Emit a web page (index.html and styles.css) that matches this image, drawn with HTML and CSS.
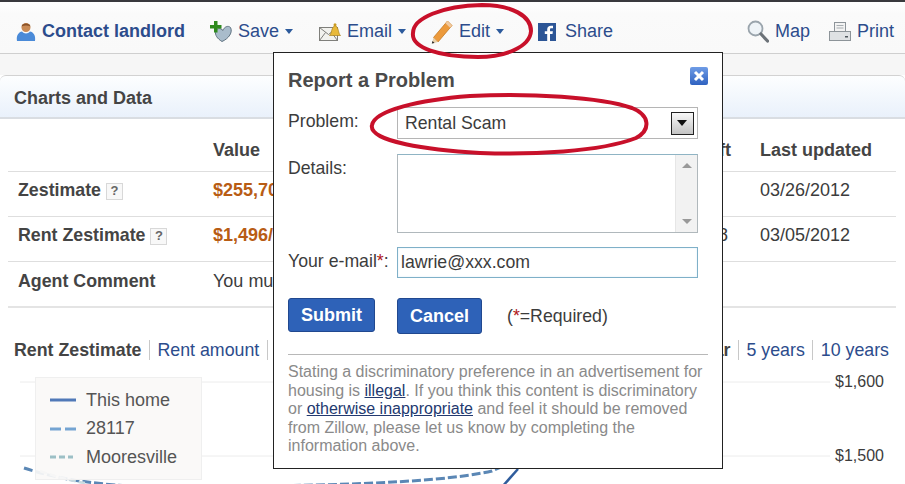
FILE: index.html
```html
<!DOCTYPE html>
<html lang="en">
<head>
<meta charset="utf-8">
<title>Report a Problem</title>
<link rel="stylesheet" href="styles.css">
</head>
<body>
<div class="page">
  <nav class="toolbar">
    <a class="tool tool-contact">
      <svg class="icon" width="20" height="20" viewBox="0 0 20 20"><circle cx="10" cy="5.500" r="4.500" fill="#c98a55"/><path d="M5.500 4.500C6 .5 14 .5 14.500 4.500 12 3 8 3 5.500 4.500z" fill="#8a5228"/><path d="M1 19c-1-6 2-9 5-9.500 2 2.500 6 2.500 8 0 3 .5 6 3.500 5 9.500z" fill="#4a8ad8"/></svg>
      <span>Contact landlord</span>
    </a>
    <a class="tool tool-save">
      <svg class="icon" width="22" height="21" viewBox="0 0 22 21"><path d="M12 20.500C7 17.500 5 14 5.500 10.500 6.500 7 10.500 6.500 13 9.500c1-3.500 5-5.500 7.500-3 2.500 4.500-1.500 11-8.500 14z" fill="#a9bccb" stroke="#5f7280"/><path d="M4 0h3.500v4H11.500v3.500H7.500V11.500H4V7.500H0V4h4z" fill="#2f8a1e"/></svg>
      <span>Save</span><i class="caret"></i>
    </a>
    <a class="tool tool-email">
      <svg class="icon" width="22" height="18" viewBox="0 0 22 18"><rect x=".5" y="4.500" width="18" height="13" fill="#f2f2ee" stroke="#7f7f7b"/><path d="M.5 4.500l9 7 9-7M.5 17.500l6-8M18.500 17.500l-6-8" fill="none" stroke="#7f7f7b"/><path d="M10.500 12.500c2.500-2 1.500-8 5.500-10 4 1.500 3 8 5.500 10z" fill="#e8b93a" stroke="#a8801c" stroke-width=".7"/><circle cx="16" cy="1.800" r="1.500" fill="#c99a20"/></svg>
      <span>Email</span><i class="caret"></i>
    </a>
    <a class="tool tool-edit">
      <svg class="icon" width="22" height="24" viewBox="0 0 22 24"><path d="M16.500 1l4.500 4.500L7 22 2.500 17.500z" fill="#ec9a3c" stroke="#c57a22" stroke-width=".8"/><path d="M16.500 1l4.500 4.500-2 2.300-4.500-4.500z" fill="#f0c9a0"/><path d="M2.500 17.500L7 22 .8 23.500z" fill="#e9cfa8"/><path d="M1.500 21L3.500 23 .8 23.500z" fill="#222"/></svg>
      <span>Edit</span><i class="caret"></i>
    </a>
    <a class="tool tool-share">
      <svg class="icon" width="18" height="18" viewBox="0 0 18 18"><rect width="18" height="18" fill="#2c5596"/><path d="M12 18v-7h2.500l.4-2.800H12V6.600c0-.8.3-1.300 1.400-1.300H15V2.800c-.5-.1-1.300-.1-2-.1-2.200 0-3.800 1.300-3.800 3.700v1.800H6.800V11h2.400v7z" fill="#fff"/></svg>
      <span>Share</span>
    </a>
    <a class="tool tool-map">
      <svg class="icon" width="22" height="23" viewBox="0 0 22 23"><circle cx="8.500" cy="8.500" r="7" fill="#eef3f7" stroke="#9aa4ac" stroke-width="1.800"/><path d="M14 14l6.500 7" stroke="#6c7278" stroke-width="3.200" stroke-linecap="round"/></svg>
      <span>Map</span>
    </a>
    <a class="tool tool-print">
      <svg class="icon" width="22" height="20" viewBox="0 0 22 20"><rect x="5.500" y=".5" width="11" height="9" fill="#f3f3f3" stroke="#8d9499"/><path d="M7.500 3.500h7M7.500 6h7" stroke="#a8aeb2"/><rect x=".5" y="9.500" width="21" height="9" fill="#dfe2e4" stroke="#8d9499"/><rect x="16" y="14" width="3" height="1.500" fill="#50585e"/></svg>
      <span>Print</span>
    </a>
  </nav>

  <div class="strip"></div>
  <h2 class="panel-head">Charts and Data</h2>

  <table class="data">
    <colgroup><col class="c1"><col class="c2"><col class="c3"><col class="c4"></colgroup>
    <thead>
      <tr><th></th><th>Value</th><th>$/sqft</th><th>Last updated</th></tr>
    </thead>
    <tbody>
      <tr><th>Zestimate <b class="help">?</b></th><td class="money">$255,700</td><td></td><td>03/26/2012</td></tr>
      <tr><th>Rent Zestimate <b class="help">?</b></th><td class="money">$1,496/mo</td><td>$0.78</td><td>03/05/2012</td></tr>
      <tr class="last"><th>Agent Comment</th><td colspan="2">You must be the listing agent to add an agent comment</td><td></td></tr>
    </tbody>
  </table>

  <div class="ranges">
    <div class="range-group">
      <b class="range">Rent Zestimate</b>
      <a class="range">Rent amount</a>
      <a class="range">Rent/sqft</a>
    </div>
    <div class="range-group">
      <b class="range">1 year</b>
      <a class="range">5 years</a>
      <a class="range">10 years</a>
    </div>
  </div>

  <section class="chart">
    <svg class="plot" width="905" height="114" viewBox="0 370 905 114">
      <path d="M20 381H830M20 455H830" stroke="#ececec" fill="none"/>
      <text class="axis" x="835" y="386">$1,600</text>
      <text class="axis" x="835" y="460">$1,500</text>
      <path d="M24 467C60 479 100 484 150 486M220 486C300 484 430 484 492 470L510 462" stroke="#5b87b5" stroke-width="3" stroke-dasharray="9 3" fill="none"/>
      <path d="M40 470C60 477 72 480 85 482" stroke="#c8dbe0" stroke-width="2.500" stroke-dasharray="7 3" fill="none"/>
      <path d="M502 486L518 468" stroke="#2f5c9c" stroke-width="2.500" fill="none"/>
    </svg>
    <div class="legend">
      <div class="legend-row"><svg width="26" height="4"><path d="M0 2H26" stroke="#5079b8" stroke-width="3"/></svg><span>This home</span></div>
      <div class="legend-row"><svg width="26" height="4"><path d="M0 2H26" stroke="#74a4d2" stroke-width="3" stroke-dasharray="11 4"/></svg><span>28117</span></div>
      <div class="legend-row"><svg width="26" height="4"><path d="M0 2H23" stroke="#9cc0c6" stroke-width="3" stroke-dasharray="6 3"/></svg><span>Mooresville</span></div>
    </div>
  </section>

  <div class="modal">
    <div class="modal-title">
      <h1>Report a Problem</h1>
      <span class="close"><svg width="12" height="12" viewBox="0 0 12 12"><path d="M2 2l8 8M10 2l-8 8" stroke="#fff" stroke-width="3"/></svg></span>
    </div>
    <form class="form">
      <label class="lbl">Problem:</label>
      <div class="select"><span>Rental Scam</span><i class="select-btn"></i></div>
      <label class="lbl">Details:</label>
      <div class="textarea"><div class="scroller"><i class="arrow-up"></i><i class="arrow-down"></i></div></div>
      <label class="lbl">Your e-mail<em>*</em>:</label>
      <input class="email" type="text" value="lawrie@xxx.com">
    </form>
    <div class="actions">
      <button class="btn btn-submit" type="button">Submit</button>
      <button class="btn btn-cancel" type="button">Cancel</button>
      <span class="req">(<em>*</em>=Required)</span>
    </div>
    <p class="note">Stating a discriminatory preference in an advertisement for housing is <a>illegal</a>. If you think this content is discriminatory or <a>otherwise inappropriate</a> and feel it should be removed from Zillow, please let us know by completing the information above.</p>
  </div>

  <svg class="marks" width="905" height="160" viewBox="0 0 905 160">
    <path d="M413 33C413 18 442 6 482 5 512 5 531 16 531 31 530 47 505 57 478 57 440 57 411 48 413 33z"/>
    <path d="M372 125C375 110 420 100 470 96 530 93 600 97 632 108 650 115 651 130 636 138 600 152 530 155 480 153 430 150 368 142 372 125z"/>
  </svg>
</div>
</body>
</html>
```

FILE: styles.css
```css
* { box-sizing: border-box; }
html, body { margin: 0; padding: 0; }
body { font-family: "Liberation Sans", Arial, sans-serif; color: #3c3c3c; background: #fff; }
.page { position: relative; width: 905px; height: 484px; overflow: hidden; }

.toolbar { display: flex; align-items: center; height: 54px; padding: 8px 0 0 16px; border-top: 2px solid #3a3a3e; border-bottom: 1px solid #cfcfcf; background: linear-gradient(#fff, #fafafa 12px, #f9f9f9); font-size: 18px; color: #2c4c8c; }
.tool { display: flex; align-items: center; gap: 6px; }
.tool-contact { font-weight: bold; }
.tool-save { margin-left: 25px; }
.tool-email { margin-left: 26px; }
.tool-edit { margin-left: 25px; }
.tool-share { margin-left: 34px; gap: 9px; }
.tool-map { margin-left: auto; }
.tool-print { margin-left: 19px; margin-right: 11px; }
.caret { width: 0; height: 0; border: 4px solid transparent; border-top: 5px solid #2c5a9c; border-bottom: 0; }

.strip { height: 21px; background: #f6f6f6; }
.panel-head { margin: 0; height: 44px; padding-left: 14px; border-top: 1px solid #d2d2d2; border-bottom: 2px solid #d9dde2; border-radius: 6px 6px 0 0; background: linear-gradient(#fdfeff, #e9f1fb); font-size: 18px; line-height: 44px; font-weight: bold; color: #444; }

.data { width: 888px; margin: 11px 0 0 8px; table-layout: fixed; border-collapse: collapse; font-size: 18px; }
.c1 { width: 195px; }
.c2 { width: 470px; }
.c3 { width: 77px; }
.data th, .data td { padding: 0 0 0 10px; text-align: left; white-space: nowrap; overflow: hidden; border-bottom: 1px solid #dedede; }
.data tbody th, .data tbody td { padding-bottom: 7px; }
.data tbody th { font-size: 17.800px; }
.data th { font-weight: bold; color: #444; }
.data td { color: #3c3c3c; }
.data thead tr { height: 41px; }
.data tbody tr { height: 45px; }
.data .last th, .data .last td { border-bottom: 2px solid #e4e4e4; height: 46px; padding-bottom: 5px; }
.data .money { color: #b85c14; font-weight: bold; }
.help { display: inline-block; width: 17px; height: 17px; margin-left: 0; border: 1px solid #d8d8d8; background: #f8f8f8; font-size: 13px; line-height: 14px; text-align: center; color: #666; vertical-align: 1px; }

.ranges { display: flex; justify-content: space-between; align-items: center; height: 63px; padding: 21px 16px 0 14px; font-size: 17.800px; color: #2c4c8c; }
.range-group { display: flex; }
.range { padding: 0 7.500px; border-left: 1px solid #c8c8c8; line-height: 20px; }
.range:first-child { padding-left: 0; border-left: 0; }
.range:last-child { padding-right: 0; }
b.range { color: #444; }

.chart { position: relative; height: 114px; }
.plot { display: block; }
.axis { font-size: 16px; fill: #3c3c3c; font-family: "Liberation Sans", Arial, sans-serif; }
.legend { position: absolute; left: 35px; top: 6px; width: 167px; height: 103px; padding: 8px 0 0 14px; border: 1px solid #efefef; background: rgba(250, 248, 247, .92); font-size: 18px; color: #555; }
.legend-row { display: flex; align-items: center; gap: 10px; height: 28.500px; }

.modal { position: absolute; left: 273px; top: 52px; width: 450px; height: 417px; padding: 15px 14px 0; background: #fff; border: 1px solid #222; }
.modal-title { display: flex; justify-content: space-between; align-items: flex-start; height: 24px; }
.modal-title h1 { margin: 0; font-size: 20px; line-height: 24px; font-weight: bold; color: #4a4a4a; }
.close { display: flex; align-items: center; justify-content: center; width: 18px; height: 18px; margin-top: -1px; border-radius: 2px; background: linear-gradient(#6f9ce6, #2f62c0); }

.form { display: grid; grid-template-columns: 109px 301px; grid-template-rows: 32px 79px 31px; row-gap: 14.500px; margin-top: 15px; font-size: 17.700px; }
.form .lbl { padding-top: 4px; line-height: 20px; color: #3c3c3c; }
.lbl em, .req em { font-style: normal; color: #b01818; }
.select { display: flex; align-items: center; justify-content: space-between; padding: 0 3px 0 7px; border: 1px solid #b5b5b5; background: #fff; }
.select-btn { position: relative; width: 23px; height: 23px; border: 1px solid #222; background: linear-gradient(#f8f8f8, #c4c4c4); }
.select-btn::after { content: ""; position: absolute; left: 5px; top: 7px; border: 5px solid transparent; border-top: 6px solid #111; border-bottom: 0; }
.textarea { display: flex; justify-content: flex-end; border: 1px solid #b0b8bc; border-top-color: #8fb4c4; background: #fff; }
.scroller { display: flex; flex-direction: column; justify-content: space-between; align-items: center; width: 22px; padding: 8px 0; background: #f2f2f2; border-left: 1px solid #e6e6e6; }
.arrow-up { border: 5px solid transparent; border-bottom: 5px solid #999; border-top: 0; }
.arrow-down { border: 5px solid transparent; border-top: 5px solid #999; border-bottom: 0; }
.email { width: 301px; height: 31px; margin: 0; padding: 0 3px; border: 1px solid #7fb0c8; box-shadow: inset 0 0 2px #d8ecf8; font: 17.700px "Liberation Sans", Arial, sans-serif; color: #3c3c3c; outline: 0; }

.actions { display: flex; align-items: flex-start; margin-top: 20px; font-size: 17.700px; }
.btn { margin: 0; padding: 0; border: 1px solid #21488f; border-radius: 3px; background: #2e62b8; color: #fff; font: bold 18px "Liberation Sans", Arial, sans-serif; }
.btn-submit { width: 87px; height: 34px; }
.btn-cancel { width: 85px; height: 36px; margin-left: 22px; }
.req { margin-left: 25px; line-height: 36px; color: #3c3c3c; }

.note { margin: 20px 0 0; padding-top: 8px; width: 420px; border-top: 1px solid #b8b8b8; font-size: 16px; line-height: 18.500px; color: #8a8a8a; }
.note a { color: #23396f; text-decoration: underline; }

.marks { position: absolute; left: 0; top: 0; pointer-events: none; }
.marks path { fill: none; stroke: #c8102a; stroke-width: 4; }
```
